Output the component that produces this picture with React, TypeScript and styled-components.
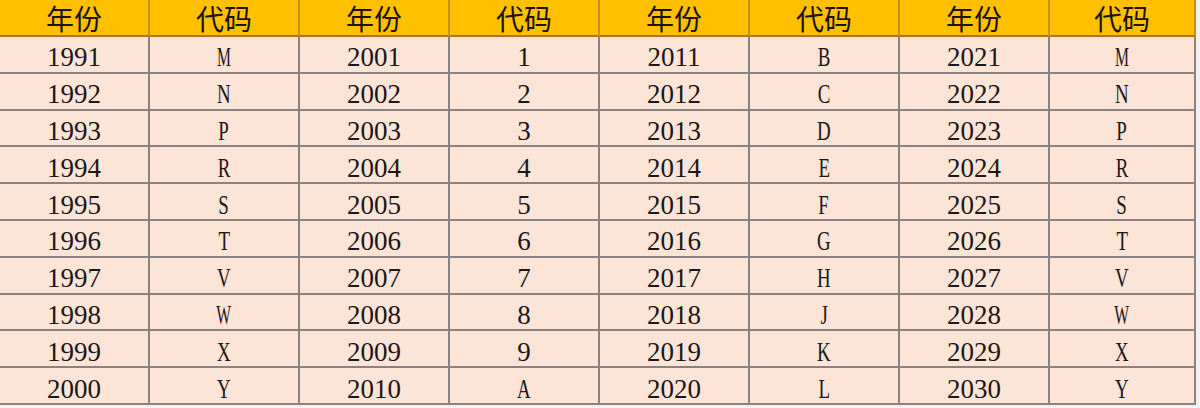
import * as React from 'react';
import styled, { createGlobalStyle } from 'styled-components';

const GlobalStyle = createGlobalStyle`
  html, body {
    margin: 0;
    padding: 0;
    background: #f4f0ee;
  }
`;

const Table = styled.div`
  display: grid;
  grid-template-columns: repeat(7, 150px) 146px;
  grid-template-rows: 37px repeat(10, 36.8px);
  width: 1196px;
  background: #fce4d6;
`;

const HeaderCell = styled.div`
  display: flex;
  align-items: center;
  justify-content: center;
  background: #ffc000;
  border-right: 2px solid #c98f1c;
  border-bottom: 2px solid #a7772a;
  box-sizing: border-box;
  font-family: 'Noto Sans CJK SC', 'Noto Sans', sans-serif;
  font-size: 28px;
  line-height: 34px;
  color: #1b1408;
  padding-top: 1px;
`;

const Cell = styled.div`
  display: flex;
  align-items: center;
  justify-content: center;
  border-right: 2px solid #8a8280;
  border-bottom: 2px solid #8a8280;
  box-sizing: border-box;
  font-family: 'Liberation Serif', 'Times New Roman', serif;
  font-size: 27px;
  line-height: 28px;
  color: #1d1616;
  padding-top: 6px;
`;

const Letter = styled.span<{ $narrow?: boolean }>`
  display: inline-block;
  transform: scaleX(${(p) => (p.$narrow ? 0.58 : 0.7)});
`;

const headers = ['年份', '代码', '年份', '代码', '年份', '代码', '年份', '代码'];

const groups: string[][] = [
  ['M', 'N', 'P', 'R', 'S', 'T', 'V', 'W', 'X', 'Y'],
  ['1', '2', '3', '4', '5', '6', '7', '8', '9', 'A'],
  ['B', 'C', 'D', 'E', 'F', 'G', 'H', 'J', 'K', 'L'],
  ['M', 'N', 'P', 'R', 'S', 'T', 'V', 'W', 'X', 'Y'],
];

const startYears = [1991, 2001, 2011, 2021];

const Code = ({ value }: { value: string }) => {
  if (/\d/.test(value)) return <>{value}</>;
  return <Letter $narrow={value === 'M' || value === 'W'}>{value}</Letter>;
};

export default function App() {
  const rows = Array.from({ length: 10 }, (_, r) => r);
  return (
    <>
      <GlobalStyle />
      <Table>
        {headers.map((h, i) => (
          <HeaderCell key={'h' + i}>{h}</HeaderCell>
        ))}
        {rows.map((r) =>
          startYears.map((y, g) => (
            <React.Fragment key={r + '-' + g}>
              <Cell>{y + r}</Cell>
              <Cell>
                <Code value={groups[g][r]} />
              </Cell>
            </React.Fragment>
          ))
        )}
      </Table>
    </>
  );
}
